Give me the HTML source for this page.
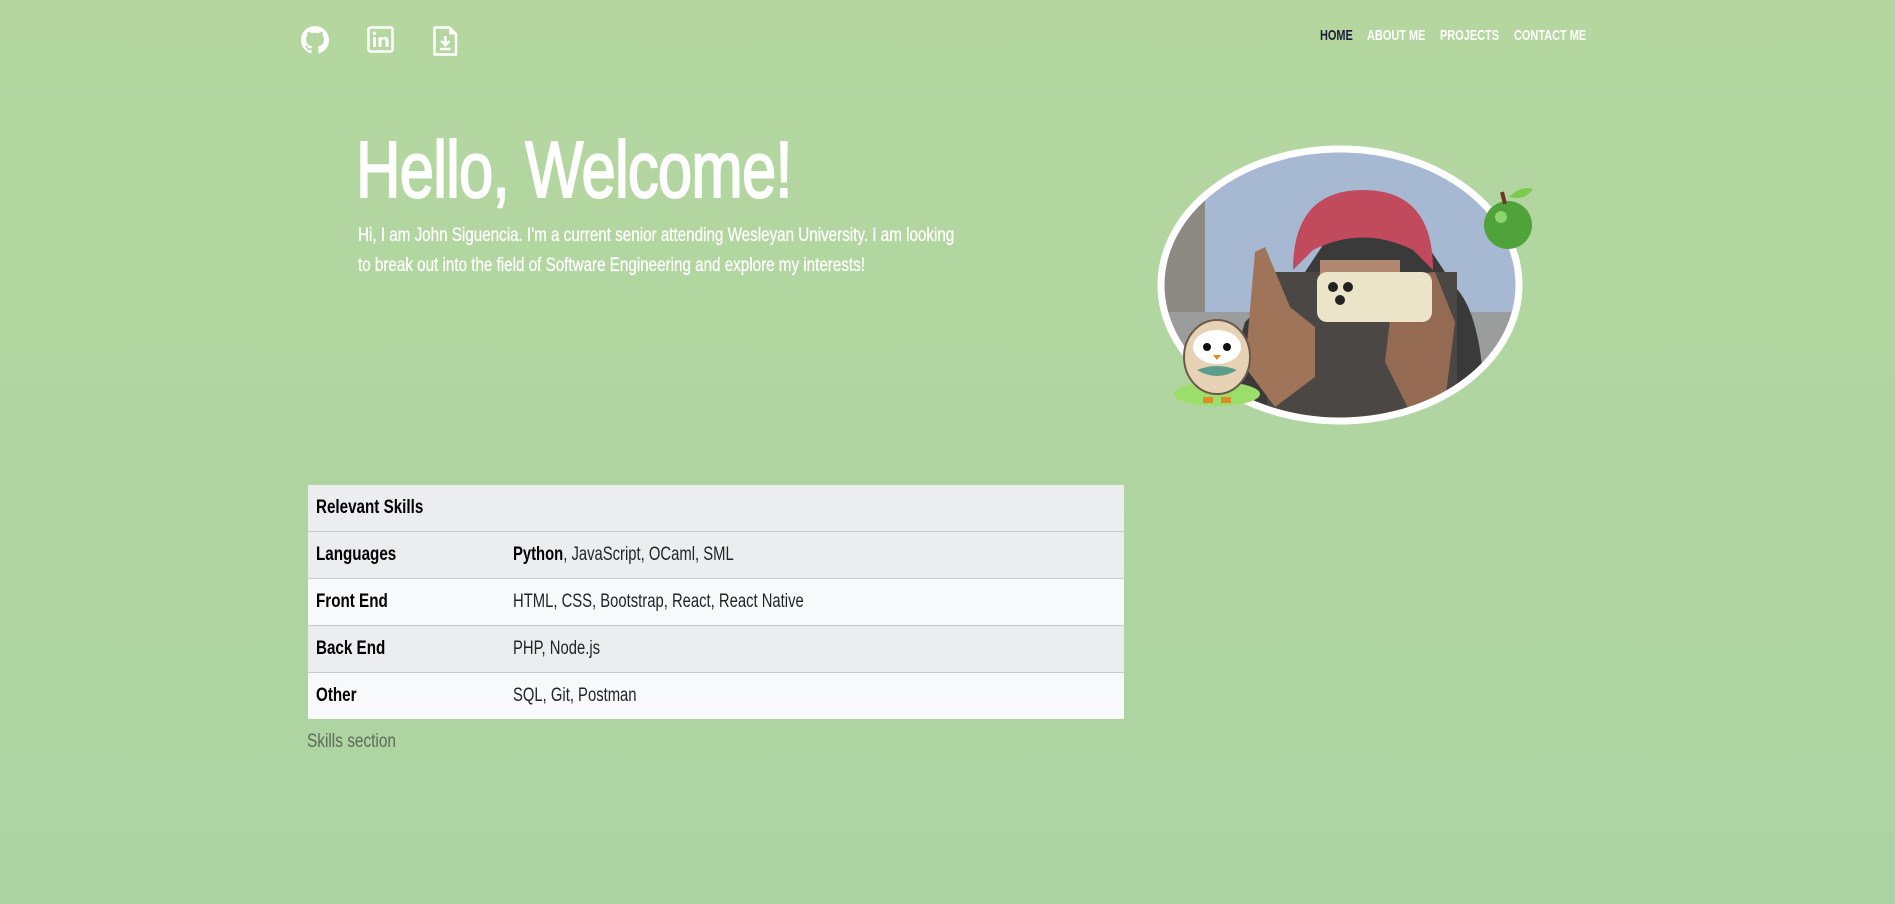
<!DOCTYPE html>
<html><head><meta charset="utf-8"><style>
html,body{margin:0;padding:0}
body{width:1895px;height:904px;overflow:hidden;background:linear-gradient(#b5d79f,#acd3a3);font-family:"Liberation Sans Narrow","Liberation Sans",sans-serif;position:relative}
.nav{position:absolute;top:27px;font-weight:bold;font-size:15px;color:#fff;transform:scaleX(0.73);transform-origin:left top;white-space:nowrap}
.ic{position:absolute;top:26px}
h1{position:absolute;left:356px;top:124px;margin:0;font-size:80px;font-weight:normal;color:#fff;white-space:nowrap;transform:scaleX(0.77);transform-origin:left top;letter-spacing:-1px;-webkit-text-stroke:2px #fff}
.p{position:absolute;left:358px;top:221px;color:#fff;font-size:19px;line-height:30px;transform:scaleX(0.8);transform-origin:left top;width:760px;-webkit-text-stroke:0.3px #fff}
table{position:absolute;left:308px;top:485px;width:816px;border-collapse:collapse;font-size:19px}
td{height:46px;border-bottom:1px solid #c8c9cb;padding:0 0 0 8px;color:#212529;white-space:nowrap}
td span{display:inline-block;transform:scaleX(0.78);transform-origin:left center}
tr.a td{background:#ecedef}tr.b td{background:#f8f9fa}
td.k{font-weight:bold;width:189px;color:#000}
td.k span{transform:scaleX(0.8)}
tr:last-child td{border-bottom:none}
.cap{position:absolute;left:307px;top:731px;font-size:19px;color:#5d6b5a;transform:scaleX(0.81);transform-origin:left top}
</style></head><body>
<svg class="ic" style="left:301px" width="28" height="28" viewBox="0 0 16 16"><path fill="#fff" d="M8 0C3.58 0 0 3.58 0 8c0 3.54 2.29 6.53 5.47 7.59.4.07.55-.17.55-.38 0-.19-.01-.82-.01-1.49-2.01.37-2.53-.49-2.69-.94-.09-.23-.48-.94-.82-1.13-.28-.15-.68-.52-.01-.53.63-.01 1.08.58 1.23.82.72 1.21 1.87.87 2.33.66.07-.52.28-.87.51-1.07-1.78-.2-3.64-.89-3.64-3.95 0-.87.31-1.59.82-2.15-.08-.2-.36-1.02.08-2.12 0 0 .67-.21 2.2.82.64-.18 1.32-.27 2-.27.68 0 1.36.09 2 .27 1.53-1.04 2.2-.82 2.2-.82.44 1.1.16 1.92.08 2.12.51.56.82 1.27.82 2.15 0 3.07-1.87 3.75-3.65 3.95.29.25.54.73.54 1.48 0 1.07-.01 1.93-.01 2.2 0 .21.15.46.55.38A8.013 8.013 0 0 0 16 8c0-4.42-3.58-8-8-8z"/></svg>
<svg class="ic" style="left:367px" width="27" height="28" viewBox="0 0 27 28"><rect x="1.5" y="1.5" width="24" height="24" rx="2" fill="none" stroke="#fff" stroke-width="2.5"/><rect x="6" y="11" width="3" height="10" fill="#fff"/><circle cx="7.5" cy="7.3" r="1.8" fill="#fff"/><path d="M11.5 11h3v1.5c.8-1.2 2-1.8 3.3-1.8 2.4 0 3.7 1.5 3.7 4.3V21h-3v-5.5c0-1.4-.6-2.2-1.8-2.2s-2.2.8-2.2 2.3V21h-3z" fill="#fff"/></svg>
<svg class="ic" style="left:433px" width="25" height="30" viewBox="0 0 25 30"><path d="M1.5 1.5h15l6.5 6.5v20.5h-21.5z" fill="none" stroke="#fff" stroke-width="2.5" stroke-linejoin="round"/><path d="M16 1.5v7h7" fill="#fff"/><path d="M12.3 10v9M8 15l4.3 4.3 4.3-4.3M7 23h10.6" fill="none" stroke="#fff" stroke-width="2.5"/></svg>
<div class="nav" style="left:1320px;color:#1d1b3f">HOME</div>
<div class="nav" style="left:1367px">ABOUT ME</div>
<div class="nav" style="left:1440px">PROJECTS</div>
<div class="nav" style="left:1514px">CONTACT ME</div>
<h1>Hello, Welcome!</h1>
<div class="p">Hi, I am John Siguencia. I'm a current senior attending Wesleyan University. I am looking to break out into the field of Software Engineering and explore my interests!</div>
<svg style="position:absolute;left:1155px;top:142px" width="420" height="290" viewBox="0 0 420 290">
<defs><clipPath id="c"><ellipse cx="185" cy="143" rx="176" ry="133"/></clipPath></defs>
<g clip-path="url(#c)">
<rect width="420" height="290" fill="#a7b8d2"/>
<rect x="0" y="0" width="50" height="290" fill="#8d8a84"/>
<rect x="0" y="170" width="380" height="120" fill="#9b9c9c"/>
<path d="M90 180 q40-40 60-50 l30-45 q40-50 80 0 l40 60 q30 30 30 140 H60z" fill="#3a3a3a"/>
<rect x="112" y="130" width="190" height="160" fill="#4b4745"/>
<path d="M138 128 q0-80 70-80 q70 0 70 80 l-20-20 q-50-25-100 0z" fill="#c14a5c"/>
<rect x="165" y="118" width="80" height="20" fill="#b08872"/>
<path d="M100 110 l10-5 25 60 25 20 v50 l-40 30 -30-40z" fill="#9f7458"/>
<path d="M240 135 l40-5 20 50 -10 80 -30 20 -30-60z" fill="#946a52"/>
<rect x="162" y="130" width="115" height="50" rx="10" fill="#ece4c8"/>
<circle cx="178" cy="145" r="5" fill="#222"/><circle cx="193" cy="145" r="5" fill="#222"/><circle cx="185" cy="158" r="5" fill="#222"/>
</g>
<ellipse cx="185" cy="143" rx="179" ry="136" fill="none" stroke="#fff" stroke-width="7"/>
<circle cx="353" cy="83" r="24" fill="#4fa33a"/><circle cx="346" cy="75" r="6" fill="#8cd46b"/>
<path d="M350 62 l-3-12" stroke="#6b3a1e" stroke-width="4"/><path d="M354 55 q12-12 24-8 q-8 12-24 8z" fill="#7ccb4f"/>
<ellipse cx="62" cy="252" rx="43" ry="12" fill="#9bdf6a"/>
<ellipse cx="62" cy="215" rx="33" ry="37" fill="#e8d2b6" stroke="#6a5a4a" stroke-width="2"/>
<ellipse cx="62" cy="205" rx="24" ry="17" fill="#fff"/>
<circle cx="52" cy="205" r="4" fill="#111"/><circle cx="72" cy="205" r="4" fill="#111"/>
<path d="M58 213h8l-4 5z" fill="#e08a2a"/>
<path d="M42 228 q20-8 40 0 q-20 12-40 0z" fill="#5c9c8a"/>
<rect x="48" y="255" width="10" height="6" fill="#e08a2a"/><rect x="66" y="255" width="10" height="6" fill="#e08a2a"/>
</svg>
<table>
<tr class="a"><td class="k" colspan="2"><span>Relevant Skills</span></td></tr>
<tr class="a"><td class="k"><span>Languages</span></td><td><span><b style="color:#000">Python</b>, JavaScript, OCaml, SML</span></td></tr>
<tr class="b"><td class="k"><span>Front End</span></td><td><span>HTML, CSS, Bootstrap, React, React Native</span></td></tr>
<tr class="a"><td class="k"><span>Back End</span></td><td><span>PHP, Node.js</span></td></tr>
<tr class="b"><td class="k"><span>Other</span></td><td><span>SQL, Git, Postman</span></td></tr>
</table>
<div class="cap">Skills section</div>
</body></html>
